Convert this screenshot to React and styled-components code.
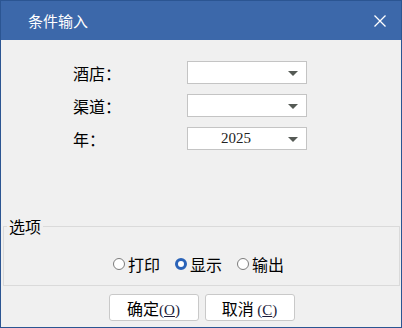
import React, { useState } from "react";
import styled, { createGlobalStyle } from "styled-components";

const GlobalStyle = createGlobalStyle`
  html, body {
    margin: 0;
    padding: 0;
    background: #f0f0f0;
  }
  * {
    box-sizing: border-box;
  }
`;

const Window = styled.div`
  width: 402px;
  height: 328px;
  display: flex;
  flex-direction: column;
  border: 1px solid #2b5592;
  background: #f0f0f0;
  font-family: "Noto Sans CJK SC", "Noto Sans", sans-serif;
  color: #000;
`;

const TitleBar = styled.div`
  height: 39px;
  flex: none;
  display: flex;
  align-items: center;
  justify-content: space-between;
  padding: 0 14px 0 27px;
  background: #3c68aa;
  color: #fff;
  font-size: 15px;
`;

const CloseButton = styled.div`
  width: 14px;
  height: 14px;
  display: flex;
  cursor: pointer;
`;

const Body = styled.div`
  flex: 1;
  display: flex;
  flex-direction: column;
  padding: 0 1px 0 2px;
`;

const Form = styled.div`
  flex: 1;
  display: grid;
  grid-template-columns: 114px 120px;
  grid-auto-rows: 23px;
  row-gap: 10px;
  align-content: start;
  padding: 21px 0 0 70px;
`;

const Label = styled.div`
  display: flex;
  align-items: center;
  font-size: 16px;
`;

const Combo = styled.div`
  position: relative;
  display: flex;
  align-items: center;
  justify-content: center;
  padding-right: 22px;
  background: #fff;
  border: 1px solid #c4c4c4;
  font-family: "Liberation Serif", serif;
  font-size: 15px;
  color: #222;
`;

const Arrow = styled.span`
  position: absolute;
  right: 8px;
  top: 9px;
  width: 0;
  height: 0;
  border-left: 5px solid transparent;
  border-right: 5px solid transparent;
  border-top: 5px solid #555a55;
`;

const Group = styled.fieldset`
  margin: 0;
  padding: 19px 0 10px;
  border: 1px solid #dadada;
  min-width: 0;
`;

const Legend = styled.legend`
  padding: 0 2px;
  margin-left: 3px;
  font-size: 16px;
  line-height: 16px;
`;

const RadioRow = styled.div`
  display: flex;
  justify-content: center;
  gap: 15px;
  padding-right: 6px;
  height: 22px;
`;

const RadioOption = styled.label`
  display: flex;
  align-items: center;
  gap: 3px;
  font-size: 16px;
  cursor: pointer;
`;

const RadioDot = styled.span`
  width: 12px;
  height: 12px;
  border-radius: 50%;
  flex: none;
  border: ${(p) => (p.checked ? "3.5px solid #2a63b8" : "1px solid #7c7c7c")};
  background: #fff;
`;

const ButtonRow = styled.div`
  display: flex;
  justify-content: center;
  gap: 6px;
  padding: 8px 0 6px;
`;

const Button = styled.button`
  width: 90px;
  height: 27px;
  padding: 0;
  background: #fff;
  border: 1px solid #c9c9c9;
  border-radius: 3px;
  font-family: "Noto Sans CJK SC", "Noto Sans", sans-serif;
  font-size: 16px;
  color: #000;
  cursor: pointer;
`;

const Key = styled.span`
  font-family: "Liberation Serif", serif;
  font-size: 15px;
  color: #1b1b3a;
`;

const options = ["打印", "显示", "输出"];

export default function App() {
  const [mode, setMode] = useState("显示");

  return (
    <>
      <GlobalStyle />
      <Window>
        <TitleBar>
          <span>条件输入</span>
          <CloseButton>
            <svg width="14" height="14" viewBox="0 0 14 14">
              <path d="M1.5 1.5 L12.5 12.5 M12.5 1.5 L1.5 12.5" stroke="#fff" strokeWidth="1.3" />
            </svg>
          </CloseButton>
        </TitleBar>
        <Body>
          <Form>
            <Label>酒店：</Label>
            <Combo>
              <Arrow />
            </Combo>
            <Label>渠道：</Label>
            <Combo>
              <Arrow />
            </Combo>
            <Label>年：</Label>
            <Combo>
              2025
              <Arrow />
            </Combo>
          </Form>
          <Group>
            <Legend>选项</Legend>
            <RadioRow>
              {options.map((o) => (
                <RadioOption key={o} onClick={() => setMode(o)}>
                  <RadioDot checked={mode === o} />
                  {o}
                </RadioOption>
              ))}
            </RadioRow>
          </Group>
          <ButtonRow>
            <Button>
              确定<Key>(<u>O</u>)</Key>
            </Button>
            <Button>
              取消 <Key>(<u>C</u>)</Key>
            </Button>
          </ButtonRow>
        </Body>
      </Window>
    </>
  );
}
